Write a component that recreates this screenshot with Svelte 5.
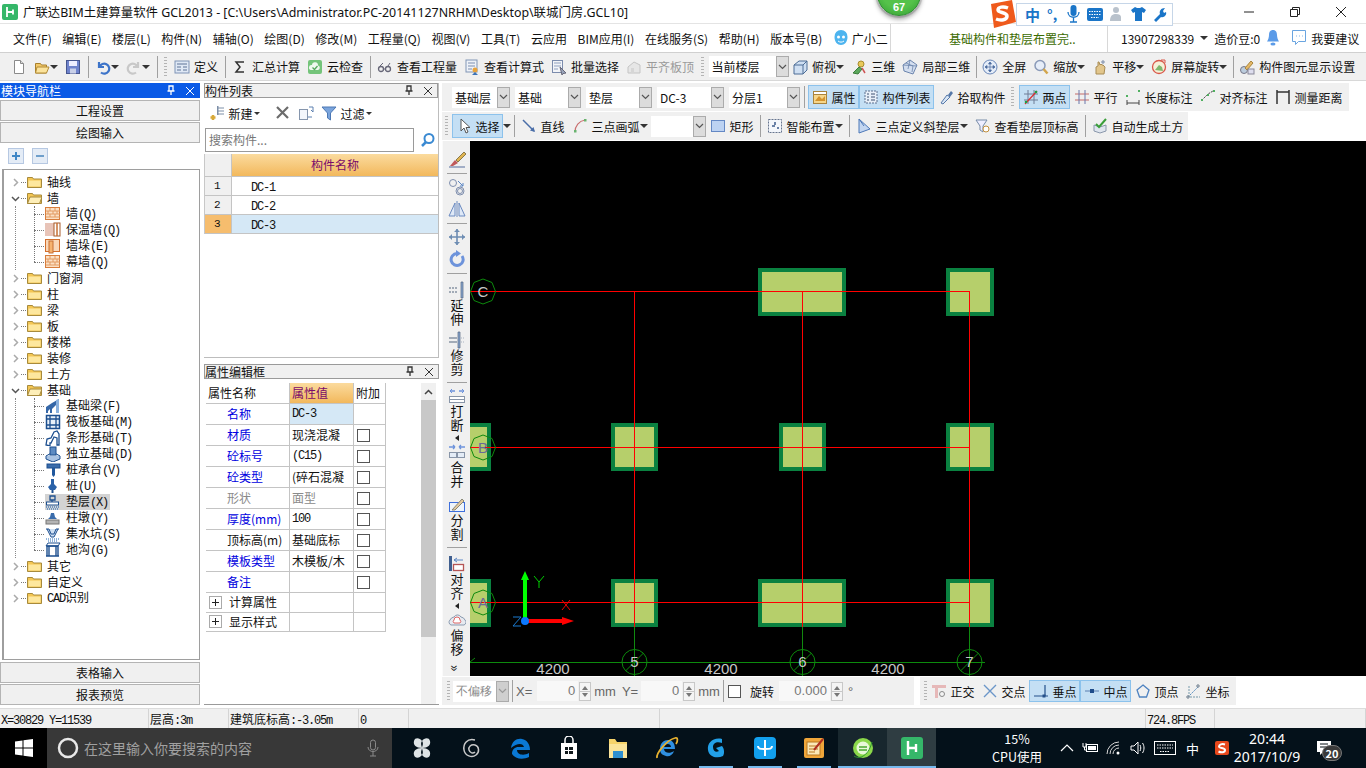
<script>
  const icons = {
    doc: '<path d="M3.500 1.500h6l3 3v10h-9z" fill="#fff" stroke="#8a8a8a"/><path d="M9.500 1.500v3h3" fill="#ddd" stroke="#8a8a8a"/>',
    open: '<path d="M1.500 4.500h5l1 1.500h5v8h-11z" fill="#f2c868" stroke="#a8802c"/><path d="M3 8h12l-2.500 6h-11z" fill="#fbe39c" stroke="#b38c36"/>',
    save: '<rect x="1.500" y="1.500" width="13" height="13" fill="#6f83cc" stroke="#46568f"/><rect x="4" y="2" width="8" height="5" fill="#eef"/><rect x="5" y="9.500" width="6" height="5" fill="#c9d0e8"/>',
    undo: '<path d="M4 3v5h5M4.500 8a5 5 0 1 1 1.500 5.500" fill="none" stroke="#3d74c9" stroke-width="2.200"/>',
    redo: '<path d="M12 3v5h-5M11.500 8a5 5 0 1 0-1.500 5.500" fill="none" stroke="#c8c8c8" stroke-width="2.200"/>',
    def: '<rect x="1" y="2" width="14" height="12" fill="#dfe8f5" stroke="#7f93b5"/><path d="M3 5h10M3 8h4M9 8h4M3 11h4M9 11h4" stroke="#5d7396"/>',
    sum: '<path d="M12 3H4l4 5-4 5h8" fill="none" stroke="#333" stroke-width="1.500"/>',
    cloud: '<rect x="1" y="1" width="14" height="14" rx="2" fill="#74c47a"/><path d="M4 11a2.500 2.500 0 0 1 1-5 3 3 0 0 1 6 .5 2.300 2.300 0 0 1 0 4.500z" fill="#eef8ee"/><path d="M5.500 8.500l2 2 3-3.500" fill="none" stroke="#54a85c" stroke-width="1.300"/>',
    glass: '<circle cx="4" cy="10" r="2.500" fill="none" stroke="#667" stroke-width="1.300"/><circle cx="11" cy="10" r="2.500" fill="none" stroke="#667" stroke-width="1.300"/><path d="M6.500 10h2M3 7l3-3M11 7l2-3" stroke="#667"/>',
    calc: '<rect x="2" y="1" width="11" height="12" fill="#eef2f8" stroke="#8095b5"/><path d="M4 4h7M4 7h7M4 10h4" stroke="#7d8fb0"/><circle cx="11" cy="11" r="2.500" fill="#e8a33c"/><path d="M8 16l3-3 3 3" fill="#3c74b8"/>',
    batch: '<rect x="1.500" y="1.500" width="10" height="12" fill="#f2f4f8" stroke="#7c8cad"/><path d="M3 4h7M3 7h7M3 10h4" stroke="#8fa0bf"/><path d="M9 8l6 6-3 .5-1 1.500z" fill="#9aa6bd" stroke="#667"/>',
    flat: '<path d="M2 14V8l6-5 6 3v8z" fill="#e6e6e6" stroke="#c4c4c4"/><path d="M5 14V9h3v5" fill="#d6d6d6"/>',
    top: '<path d="M2 6l5-4h8v9l-4 4H2z" fill="#cfdff2" stroke="#4c6d96"/><path d="M2 6h9v9M11 6l4-4" fill="none" stroke="#4c6d96"/>',
    d3: '<circle cx="10" cy="5" r="3" fill="#e8c95a" stroke="#a98c2c"/><path d="M2 14l6-6 3 2-4 5z" fill="#5ca85c" stroke="#3b7c3b"/><path d="M11 9l3 5" stroke="#cf5555" stroke-width="1.500"/>',
    local: '<path d="M8 1l7 5-4 9-9-3-1-6z" fill="#d3deef" stroke="#6c85ad"/><path d="M4 4l7 3-1 6M8 1L6 10M1 6l14 1" fill="none" stroke="#6c85ad" stroke-width=".8"/>',
    full: '<circle cx="8" cy="8" r="7" fill="#e4ecf8" stroke="#6a87b8"/><path d="M8 3v10M3 8h10M8 3l-1.500 2h3zM8 13l-1.500-2h3zM3 8l2-1.500v3zM13 8l-2-1.500v3z" stroke="#4b6b9e" fill="#4b6b9e" stroke-width=".7"/>',
    zoom: '<circle cx="7" cy="6.500" r="5" fill="#e6edf8" stroke="#8a9ab8" stroke-width="1.500"/><path d="M10.500 10l4 4.500" stroke="#d2a54c" stroke-width="2.500"/>',
    pan: '<path d="M4 15V8l2-1V3l1 0 1 3 1-1 1 1 1 0 2 2-1 7z" fill="#e2c68c" stroke="#a88c55"/><path d="M11 1v4M9 3h4" stroke="#7a8ba8"/>',
    rot: '<circle cx="8" cy="8" r="6.500" fill="#f5f0d8" stroke="#d9584a" stroke-width="1.300"/><path d="M4 11l4-5 3 2 1 4z" fill="#7fb86f"/><path d="M10 1h4v3" fill="none" stroke="#d9584a"/>',
    show: '<circle cx="5" cy="11" r="3.500" fill="#bcd" stroke="#778"/><path d="M6 9l6-7 2 2-6 7z" fill="#e6b968" stroke="#a7843c"/><rect x="9" y="10" width="6" height="5" fill="#dde" stroke="#889"/>',
    attr: '<rect x="1.500" y="2.500" width="13" height="12" fill="#f6d68a" stroke="#a9843d"/><path d="M3 12l4-5 3 3 3-3v5z" fill="#d4942e"/><rect x="1.500" y="2.500" width="13" height="3" fill="#fff" stroke="#a9843d"/>',
    list: '<rect x="2" y="2" width="12" height="12" fill="#e8eff8" stroke="#5b6e8e" stroke-dasharray="2 1"/><path d="M4 5h2M4 8h2M4 11h2M8 5h4M8 8h4M8 11h4" stroke="#3d5070"/>',
    pick: '<path d="M3 14l6-8 3 2-7 7z" fill="#d8e6f6" stroke="#5477a8"/><path d="M10 6l3-4 2 2-3 4z" fill="#5477a8"/>',
    two: '<path d="M1 5h14M1 11h14M5 1v14M11 1v14" stroke="#6f7d96"/><path d="M2 15L14 2" stroke="#d93030" stroke-width="1.200"/><circle cx="3" cy="13" r="1.300" fill="#1f9d45"/><circle cx="13" cy="3" r="1.300" fill="#1f9d45"/>',
    par: '<path d="M1 5h14M1 11h14" stroke="#c46a6a"/><path d="M5 1v14M11 1v14" stroke="#6a78ad"/>',
    len: '<path d="M2 14h12M2 11v5M14 11v5" stroke="#444"/><rect x="1" y="6" width="2" height="2" fill="#50b060"/><rect x="13" y="1" width="2" height="2" fill="#50b060"/>',
    ali: '<path d="M2 11L8 5l5-3" fill="none" stroke="#444" stroke-dasharray="2 1"/><rect x="1" y="10" width="2" height="2" fill="#50b060"/><rect x="7" y="5" width="2" height="2" fill="#50b060"/><rect x="13" y="1" width="2" height="2" fill="#50b060"/>',
    meas: '<path d="M2 1v14M14 1v14M2 3h12" stroke="#333" stroke-width="1.500"/>',
    sel: '<path d="M5 1v12l3-3 2 5 2-1-2-4.500h4z" fill="#fff" stroke="#555"/>',
    line: '<path d="M2 2l11 11" stroke="#4a6ea8" stroke-width="1.500"/><path d="M14 14l-5-1.500 3.500-3.500z" fill="#4a6ea8"/>',
    arc: '<path d="M3 14C3 8 7 3 13 2" fill="none" stroke="#c97070" stroke-width="1.200"/><rect x="2" y="12" width="2.500" height="2.500" fill="#69b36f"/><rect x="12" y="1" width="2.500" height="2.500" fill="#69b36f"/>',
    rect: '<rect x="1.500" y="2.500" width="13" height="11" fill="#bcd2f2" stroke="#6488c4"/>',
    smart: '<rect x="1.500" y="1.500" width="13" height="13" fill="#f3f6fb" stroke="#67758e" stroke-dasharray="2 1"/><path d="M8 4v3M5 8h3M11 11v-2" stroke="#3d5b8c" stroke-width="1.500"/>',
    slope: '<path d="M3 1v14l11-4z" fill="#c3d6f1" stroke="#4d78b8"/><path d="M3 1l5 7" stroke="#4d78b8"/>',
    elev: '<path d="M1 2h11l-4 6v6l-3-2V8z" fill="#eef" stroke="#778ca8"/><circle cx="11" cy="11" r="3" fill="#fff" stroke="#c28f3c"/>',
    auto: '<path d="M2 7v6l6 2 6-2V7l-6 2z" fill="#dfe5ee" stroke="#8a97ab"/><path d="M4 6l3 3 7-8" fill="none" stroke="#3a9e3a" stroke-width="2"/>',
    ortho: '<path d="M1 2h14v3H7v10H4V5H1z" fill="#e6b8b8"/><circle cx="11" cy="11" r="2.500" fill="#f4f4f4" stroke="#8a8a8a"/>',
    cross: '<path d="M2 2l12 12M14 2L2 14" stroke="#6b96c9" stroke-width="1.400"/>',
    perp: '<path d="M1 13h14M12 2v11" stroke="#24508a" stroke-width="1.200"/><rect x="9.500" y="11.500" width="3" height="3" fill="#24508a"/>',
    mid: '<path d="M1 8h14" stroke="#5a7fb0"/><rect x="6" y="6" width="4" height="4" fill="#1e4c8a"/>',
    vert: '<path d="M8 2l6 5-2.500 7h-7L2 7z" fill="none" stroke="#4e82c0" stroke-width="1.300"/>',
    coord: '<path d="M3 3v11h11" fill="none" stroke="#79a" stroke-dasharray="2 1"/><path d="M4 12l8-8" stroke="#5a8fc0" stroke-dasharray="2 1"/><circle cx="12" cy="3" r="1.200" fill="none" stroke="#678"/><circle cx="2" cy="14" r="1.200" fill="none" stroke="#678"/>',
    add: '<path d="M8 3h7M8 6h7M8 9h7" stroke="#7d8fa8"/><rect x="8" y="1" width="1.500" height="9" fill="#7d8fa8"/><path d="M4 10v5M1.500 12.500h5" stroke="#d7a93a" stroke-width="2.500"/>',
    x: '<path d="M2 2l11 11M13 2L2 13" stroke="#6c6c6c" stroke-width="2.200"/>',
    copy: '<rect x="1.500" y="4.500" width="8" height="10" fill="#f3f6fb" stroke="#8696ad"/><path d="M11 2h4v5M15 7l-2-2" fill="none" stroke="#5c80b0"/><path d="M10 12h4" stroke="#5c80b0"/>',
    filter: '<path d="M1 2h14l-5.500 6v7l-3-2V8z" fill="#7aa4dc" stroke="#4c78b4"/>',
    search: '<circle cx="9" cy="6.500" r="4.500" fill="none" stroke="#3b8ad2" stroke-width="2"/><path d="M6 10l-4 4" stroke="#3b8ad2" stroke-width="2.500"/>',
    wall: '<rect x=".5" y="1.500" width="14" height="12" fill="#fbe0c4" stroke="#d87d3c"/><path d="M1 5h14M1 8h14M1 11h14M5 2v3M10 2v3M3 5v3M8 5v3M12 5v3M5 8v3M10 8v3" stroke="#e29a63"/>',
    wall2: '<rect x="0" y="1" width="9" height="13" fill="#e8c4b8"/><rect x="9" y="1" width="6" height="13" fill="#fff" stroke="#a85d2c"/><path d="M12 1v13" stroke="#c66f34" stroke-width="1.500"/>',
    wall3: '<rect x=".5" y="1.500" width="14" height="12" fill="#f9d8b9" stroke="#d26f2e"/><rect x="4" y="3" width="4" height="12" fill="#f6b36f" stroke="#c66f34"/>',
    beam: '<path d="M1 15V9l6-4 7-4v14h-3V7L7 11v4H5v-4l-2 2v2z" fill="#3567a8"/><path d="M11 2l3-1v14h-3z" fill="#8ab1de"/>',
    raft: '<rect x="1.500" y="1.500" width="13" height="13" fill="#e8f0f9" stroke="#1d4f8f" stroke-width="1.500"/><path d="M1 5h14M1 11h14M5 1v14M11 1v14" stroke="#1d4f8f" stroke-width="1.300"/>',
    strip: '<path d="M1 15l1-6 4-1 3-6 3-1 2 3v11h-2v-7l-3-1-3 6H5v3z" fill="#fff" stroke="#1d4f8f" stroke-width="1.300"/>',
    iso: '<path d="M1 10l7-4 7 4-7 4z" fill="#dce9f6" stroke="#1d4f8f"/><path d="M1 10v3l7 3 7-3v-3" fill="#a9c3e3" stroke="#1d4f8f"/><rect x="5" y="1" width="6" height="8" fill="#5d8bc2" stroke="#1d4f8f"/>',
    cap: '<rect x="2" y="2" width="13" height="4" fill="#3a6cab" stroke="#1d4f8f"/><path d="M7 6h3v7l-1.500 2L7 13z" fill="#20589e"/>',
    pile: '<path d="M6 1h3v5l3 3-2 3H5L3 9l3-3z" fill="#2a62a8"/><path d="M7.500 12v3" stroke="#1d4f8f" stroke-width="2"/>',
    pad: '<path d="M5 2h5v4H5zM7 6v2" fill="none" stroke="#1d4f8f" stroke-width="1.300"/><rect x="1.500" y="8" width="12" height="3" fill="#fff" stroke="#1d4f8f"/><path d="M1 13h13M2 15h11" stroke="#4d81bf" stroke-dasharray="1 1" stroke-width="1.500"/>',
    pier: '<path d="M6 3h3l1 4 2 2H3l2-2z" fill="#3a6cab"/><rect x="1" y="10" width="13" height="4" fill="#b4b4b4" stroke="#777"/>',
    sump: '<path d="M1 3h3l2 5h3l2-5h3M2 3l4 8h3l4-8" fill="#cfe0f3" stroke="#1d4f8f"/><path d="M1 13h13M3 15h9" stroke="#6b9ad0" stroke-dasharray="1 1" stroke-width="1.500"/>',
    ditch: '<path d="M3 1h12l-2 3H1z" fill="#fff" stroke="#1d4f8f"/><path d="M2 4h11v10H2zM4 4v10M11 4v10M1 14h13" fill="none" stroke="#1d4f8f" stroke-width="1.400"/>'
  };

  const main = [
    { i: 'doc' }, { i: 'open', c: 1 }, { i: 'save' }, { sep: 1 }, { i: 'undo', c: 1 }, { i: 'redo', c: 1, dim: 1 }, { sep: 1 }, { grip: 1 },
    { i: 'def', t: '定义' }, { sep: 1 }, { i: 'sum', t: '汇总计算' }, { i: 'cloud', t: '云检查' }, { sep: 1 },
    { i: 'glass', t: '查看工程量' }, { i: 'calc', t: '查看计算式' }, { i: 'batch', t: '批量选择' }, { i: 'flat', t: '平齐板顶', dim: 1 }, { grip: 1 },
    { combo: '当前楼层', w: 80 }, { i: 'top', t: '俯视', c: 1 }, { i: 'd3', t: '三维' }, { i: 'local', t: '局部三维' }, { sep: 1, tight: 1 },
    { i: 'full', t: '全屏' }, { i: 'zoom', t: '缩放', c: 1 }, { i: 'pan', t: '平移', c: 1 }, { i: 'rot', t: '屏幕旋转', c: 1 }, { sep: 1, tight: 1 }, { i: 'show', t: '构件图元显示设置' }
  ];
  const rowA = [
    { combo: '基础层', w: 58 }, { combo: '基础', w: 66 }, { combo: '垫层', w: 66 }, { combo: 'DC-3', w: 67 }, { combo: '分层1', w: 71 }, { sep: 1 },
    { i: 'attr', t: '属性', on: 1 }, { i: 'list', t: '构件列表', on: 1 }, { i: 'pick', t: '拾取构件' }, { grip: 1 },
    { i: 'two', t: '两点', on: 1 }, { i: 'par', t: '平行' }, { i: 'len', t: '长度标注' }, { i: 'ali', t: '对齐标注' }, { i: 'meas', t: '测量距离' }
  ];
  const rowB = [
    { i: 'sel', t: '选择', on: 1 }, { drop: 1 }, { sep: 1 }, { i: 'line', t: '直线' }, { i: 'arc', t: '三点画弧', c: 1 }, { combo: '', w: 55 },
    { i: 'rect', t: '矩形' }, { sep: 1 }, { i: 'smart', t: '智能布置', c: 1 }, { sep: 1 }, { i: 'slope', t: '三点定义斜垫层', c: 1 }, { i: 'elev', t: '查看垫层顶标高' }, { sep: 1 }, { i: 'auto', t: '自动生成土方' }
  ];
  const snaps = [
    { i: 'ortho', t: '正交' }, { i: 'cross', t: '交点' }, { i: 'perp', t: '垂点', on: 1 }, { i: 'mid', t: '中点', on: 1 }, { i: 'vert', t: '顶点' }, { i: 'coord', t: '坐标' }
  ];
  const menus = ['文件(F)', '编辑(E)', '楼层(L)', '构件(N)', '辅轴(O)', '绘图(D)', '修改(M)', '工程量(Q)', '视图(V)', '工具(T)', '云应用', 'BIM应用(I)', '在线服务(S)', '帮助(H)', '版本号(B)'];

  const tree = [
    { t: '轴线' },
    { t: '墙', kids: [{ i: 'wall', t: '墙', s: '(Q)' }, { i: 'wall2', t: '保温墙', s: '(Q)' }, { i: 'wall3', t: '墙垛', s: '(E)' }, { i: 'wall', t: '幕墙', s: '(Q)' }] },
    { t: '门窗洞' }, { t: '柱' }, { t: '梁' }, { t: '板' }, { t: '楼梯' }, { t: '装修' }, { t: '土方' },
    { t: '基础', kids: [
      { i: 'beam', t: '基础梁', s: '(F)' }, { i: 'raft', t: '筏板基础', s: '(M)' }, { i: 'strip', t: '条形基础', s: '(T)' }, { i: 'iso', t: '独立基础', s: '(D)' },
      { i: 'cap', t: '桩承台', s: '(V)' }, { i: 'pile', t: '桩', s: '(U)' }, { i: 'pad', t: '垫层', s: '(X)', sel: 1 }, { i: 'pier', t: '柱墩', s: '(Y)' }, { i: 'sump', t: '集水坑', s: '(S)' }, { i: 'ditch', t: '地沟', s: '(G)' }
    ] },
    { t: '其它' }, { t: '自定义' }, { t: '识别', pre: 'CAD' }
  ];

  const props = [
    { n: '名称', v: 'DC-3', blue: 1, sel: 1, lat: 1 },
    { n: '材质', v: '现浇混凝', blue: 1, ck: 1 },
    { n: '砼标号', v: '(C15)', blue: 1, ck: 1, lat: 1 },
    { n: '砼类型', v: '(碎石混凝', blue: 1, ck: 1 },
    { n: '形状', v: '面型', gray: 1, ck: 1 },
    { n: '厚度(mm)', v: '100', blue: 1, ck: 1, lat: 1 },
    { n: '顶标高(m)', v: '基础底标', ck: 1 },
    { n: '模板类型', v: '木模板/木', blue: 1, ck: 1 },
    { n: '备注', v: '', blue: 1, ck: 1 }
  ];

  const side = [
    { i: 'paint' }, { sep: 1 }, { i: 'circ' }, { i: 'mirror' }, { sep: 1 }, { i: 'move' }, { i: 'spin' }, { sep: 1 },
    { i: 'ext', t: '延伸', push: 1 }, { i: 'trim', t: '修剪' }, { sep: 1 }, { i: 'brk', t: '打断', c: 1 }, { i: 'merge', t: '合并' }, { i: 'split', t: '分割', push: 1 }, { sep: 1 },
    { i: 'align', t: '对齐', c: 1, push: 1 }, { i: 'off', t: '偏移' }
  ];
  const sideIcons = {
    paint: '<path d="M2 16l5-6 3 3-5 3z" fill="#c05a5a"/><path d="M8 10l8-8 2 2-8 8z" fill="#e0b450" stroke="#8a7a4a"/><path d="M1 17h16" stroke="#8898b8" stroke-width="1.500"/>',
    circ: '<circle cx="5" cy="5" r="3.500" fill="none" stroke="#7f8fae"/><circle cx="12" cy="13" r="4" fill="none" stroke="#7f8fae"/><circle cx="12" cy="13" r="2.500" fill="none" stroke="#7f8fae"/><path d="M10 3l5 5M15 5v3h-3" fill="none" stroke="#5b86c4"/>',
    mirror: '<path d="M9 1v16" stroke="#6b8ac0"/><path d="M7 3v13H1zM11 3v13h6z" fill="#dfe9f7" stroke="#6b8ac0"/>',
    move: '<path d="M9 1v16M1 9h16" stroke="#6e8db3" stroke-width="1.600"/><path d="M9 1L6 4h6zM9 17l-3-3h6zM1 9l3-3v6zM17 9l-3-3v6z" fill="#6e8db3"/>',
    spin: '<path d="M14 6a6 6 0 1 1-5-2.500" fill="none" stroke="#6d93db" stroke-width="3"/><path d="M8 0l5 3.500L8 7z" fill="#6d93db"/>',
    ext: '<path d="M1 7h9M1 11h9" stroke="#55667e" stroke-dasharray="2 1"/><path d="M15 1v16h-2V1z" fill="#89a8d2" stroke="#55667e" stroke-width=".7"/>',
    trim: '<path d="M1 7h8M1 11h8" stroke="#55667e"/><path d="M10 1v16h2V1z" fill="#89a8d2" stroke="#55667e" stroke-width=".7"/><path d="M13 7h4M13 11h4" stroke="#aab4c2" stroke-dasharray="1 1"/>',
    brk: '<path d="M2 4h5M11 4h5" stroke="#6d93db" stroke-width="1.500"/><path d="M2 4l2-2M2 4l2 2M16 4l-2-2M16 4l-2 2" stroke="#6d93db"/><rect x="1.500" y="9.500" width="15" height="3" fill="#fff" stroke="#8895a8"/><rect x="1.500" y="12.500" width="15" height="3" fill="#fff" stroke="#8895a8"/>',
    merge: '<path d="M1 4h6M17 4h-6M7 4L5 2M7 4L5 6M11 4l2-2M11 4l2 2" stroke="#6d93db" stroke-width="1.300"/><rect x="1.500" y="9.500" width="7" height="5" fill="#e4ecf6" stroke="#8895a8"/><rect x="9.500" y="9.500" width="7" height="5" fill="#e4ecf6" stroke="#8895a8"/>',
    split: '<rect x="1.500" y="6.500" width="15" height="9" fill="#eef4fb" stroke="#3e6fdc"/><path d="M4 14l10-11 2 2-9 9z" fill="#e4c9a0" stroke="#887"/>',
    align: '<rect x="1" y="1" width="3" height="15" fill="#405f8f"/><path d="M6 5h9M6 5l3-2M6 5l3 2" stroke="#5b86c4"/><rect x="5.500" y="9.500" width="10" height="6" fill="#fff" stroke="#b55555" stroke-width="1.300"/>',
    off: '<path d="M3 14a3 3 0 0 1-1-5 5 5 0 0 1 4-3 4 4 0 0 1 7 0 5 5 0 0 1 4 3 3 3 0 0 1-1 5z" fill="#e6eaf0" stroke="#8b9bb0"/><path d="M6 12a2 2 0 0 1 0-3 3 3 0 0 1 6 0 2 2 0 0 1 0 3z" fill="#fff" stroke="#d66"/>'
  };

  // canvas data, in screen coordinates
  const pads = [
    [470, 579, 21, 48], [611, 579, 47, 48], [758, 579, 88, 48], [946, 579, 48, 48],
    [470, 423, 21, 48], [611, 423, 47, 48], [779, 423, 47, 48], [946, 423, 48, 48],
    [758, 268, 88, 48], [946, 268, 48, 48]
  ];
  const rowAxes = [['C', 291.5], ['B', 447.5], ['A', 602.5]];
  const colAxes = [['5', 634.5], ['6', 802.5], ['7', 969.5]];
  const dims = [553, 721, 888];

  const status = [
    { l: 'X=30829 Y=11539', w: 149 }, { c: '层高', l: ':3m', w: 80 }, { c: '建筑底标高', l: ':-3.05m', w: 130 }, { l: '0', w: 50 },
    { w: 251 }, { w: 486 }, { l: '724.8FPS', w: 69 }, { w: 151 }
  ];
  const apps = ['fan', 'spiral', 'edge', 'store', 'files', 'ie', 'gl', 'glz', 'note', 'orb', 'gcl'];
</script>

{#snippet glyph(name, size = 16)}
  <svg width={size} height={size} viewBox="0 0 16 16">{@html icons[name]}</svg>
{/snippet}

{#snippet bar(items)}
  {#each items as it}
    {#if it.sep}
      <span class="sep" class:tight={it.tight}></span>
    {:else if it.grip}
      <span class="grip"></span>
    {:else if it.drop}
      <i class="caret loose"></i>
    {:else if it.combo !== undefined}
      <span class="combo" style="width:{it.w}px"><span class="combo-v">{it.combo}</span><span class="combo-b"><svg width="9" height="6" viewBox="0 0 9 6"><path d="M1 1l3.500 3.500L8 1" fill="none" stroke="#555" stroke-width="1.200"/></svg></span></span>
    {:else}
      <span class="tool" class:on={it.on} class:dim={it.dim}>
        {@render glyph(it.i)}
        {#if it.t}<span>{it.t}</span>{/if}
        {#if it.c}<i class="caret"></i>{/if}
      </span>
    {/if}
  {/each}
{/snippet}

{#snippet dock(title, active)}
  <div class="dock" class:active>
    <span class="dock-t">{title}</span>
    <svg width="10" height="11" viewBox="0 0 10 11"><path d="M3 1h4v5H3zM1.500 6h7M5 6v4" fill="none" stroke="currentColor" stroke-width="1.300"/></svg>
    <svg width="10" height="10" viewBox="0 0 10 10"><path d="M1 1l8 8M9 1l-8 8" stroke="currentColor"/></svg>
  </div>
{/snippet}

{#snippet spinner()}
  <span class="spin"><svg width="10" height="17" viewBox="0 0 10 17"><path d="M5 3l3 4H2zM5 14l3-4H2z" fill="#777"/></svg></span>
{/snippet}

<div class="screen">
  <header class="title">
    <svg class="logo" width="16" height="16" viewBox="0 0 16 16"><rect width="16" height="16" rx="2" fill="#35b769"/><path d="M5 3v10M5 8h6M11 5.500v5" stroke="#fff" stroke-width="1.800"/></svg>
    <span class="title-t">广联达BIM土建算量软件 GCL2013 - [C:\Users\Administrator.PC-20141127NRHM\Desktop\联城门房.GCL10]</span>
    <div class="win">
      <svg width="12" height="12" viewBox="0 0 12 12"><path d="M1 6h10" stroke="#222"/></svg>
      <svg width="12" height="12" viewBox="0 0 12 12"><path d="M1.500 3.500h7v7h-7zM3.500 3.500v-2h7v7h-2" fill="none" stroke="#222"/></svg>
      <svg width="12" height="12" viewBox="0 0 12 12"><path d="M1 1l10 10M11 1L1 11" stroke="#222"/></svg>
    </div>
  </header>

  <nav class="menu">
    <div class="menu-l">
      {#each menus as m}<span class="menu-i">{m}</span>{/each}
      <span class="menu-i helper">
        <svg width="16" height="18" viewBox="0 0 16 18"><path d="M8 1a6.500 6.500 0 0 1 6.500 7c0 5-3 8-6.500 8S1.500 13 1.500 8A6.500 6.500 0 0 1 8 1z" fill="#4db4ef"/><circle cx="5.500" cy="8" r="1.500" fill="#fff"/><circle cx="10.500" cy="8" r="1.500" fill="#fff"/><path d="M5 12c2 1.500 4 1.500 6 0" stroke="#fff" fill="none"/></svg>
        广小二
      </span>
    </div>
    <div class="menu-msg">基础构件和垫层布置完..</div>
    <div class="menu-r">
      <span>13907298339</span><i class="caret"></i><span>造价豆:0</span>
      <svg width="14" height="18" viewBox="0 0 14 18"><path d="M7 1c3 0 4 2.500 4 5s1 5 2 6.500H1C2 11 3 8.500 3 6s1-5 4-5z" fill="#5b9be8"/><ellipse cx="7" cy="15" rx="2.500" ry="1.500" fill="#5b9be8"/></svg>
      <span class="advice">
        <svg width="16" height="18" viewBox="0 0 16 18"><path d="M1.500 1.500h13v11h-7l-3 3v-3h-3z" fill="#fff" stroke="#6aa5e0"/><path d="M5 7h.800M8 7h.800M11 7h.800" stroke="#6aa5e0"/></svg>
        我要建议
      </span>
    </div>
  </nav>

  <div class="toolbar main-bar">{@render bar(main)}</div>

  <div class="work">
    <aside class="nav">
      {@render dock('模块导航栏', true)}
      <button class="nav-b first">工程设置</button>
      <button class="nav-b">绘图输入</button>
      <div class="expand">
        <span class="ex"><svg width="12" height="12" viewBox="0 0 12 12"><path d="M6 2v8M2 6h8" stroke="#3f87c6" stroke-width="2"/></svg></span>
        <span class="ex"><svg width="12" height="12" viewBox="0 0 12 12"><path d="M2 6h8" stroke="#6f9fcb" stroke-width="2"/></svg></span>
      </div>
      <div class="tree">
        {#each tree as n}
          <div class="node">
            <svg class="chev" width="9" height="9" viewBox="0 0 9 9">
              {#if n.kids}<path d="M1 3l3.500 3.500L8 3" fill="none" stroke="#555" stroke-width="1.500"/>{:else}<path d="M3 1l3.500 3.500L3 8" fill="none" stroke="#aaa" stroke-width="1.500"/>{/if}
            </svg>
            <span class="dots"></span>
            <svg width="15" height="12" viewBox="0 0 15 12">
              <path d="M.5 1.500h5l1 1.500h8v8.500H.5z" fill="#f4c653" stroke="#a78a3c"/>
              {#if n.kids}<path d="M3 5h12l-2.500 6.500H.5z" fill="#fdeeb8" stroke="#a78a3c"/>{:else}<path d="M1.500 4.500h12v6h-12z" fill="#fde79e"/>{/if}
            </svg>
            <span class="label">{#if n.pre}<span class="lat">{n.pre}</span>{/if}{n.t}</span>
          </div>
          {#if n.kids}
            <div class="kids">
              {#each n.kids as k}
                <div class="leaf">
                  <span class="dots"></span>
                  <span class="leaf-c" class:sel={k.sel}>{@render glyph(k.i)}<span class="label">{k.t}<span class="lat">{k.s}</span></span></span>
                </div>
              {/each}
            </div>
          {/if}
        {/each}
      </div>
      <button class="nav-b low">表格输入</button>
      <button class="nav-b">报表预览</button>
    </aside>

    <section class="mid">
      <div class="panel list-p">
        {@render dock('构件列表', false)}
        <div class="list-tools">
          <span class="tool">{@render glyph('add')}<span>新建</span><i class="caret small"></i></span>
          <span class="tool gapx">{@render glyph('x')}</span>
          <span class="tool">{@render glyph('copy')}</span>
          <span class="tool">{@render glyph('filter')}<span>过滤</span><i class="caret small"></i></span>
        </div>
        <div class="search">
          <span class="search-i">搜索构件...</span>
          <span class="search-b">{@render glyph('search')}</span>
        </div>
        <div class="grid">
          <div class="g-h"><span class="g-n"></span><span class="g-t head">构件名称</span></div>
          {#each ['DC-1', 'DC-2', 'DC-3'] as name, i}
            <div class="g-r" class:cur={i === 2}><span class="g-n">{i + 1}</span><span class="g-t"><span class="lat">{name}</span></span></div>
          {/each}
        </div>
      </div>

      <div class="panel attr-p">
        {@render dock('属性编辑框', false)}
        <div class="attr-body">
          <div class="attr-tbl">
            <div class="a-r a-head"><span class="a-n">属性名称</span><span class="a-v head">属性值</span><span class="a-x">附加</span></div>
            {#each props as p}
              <div class="a-r">
                <span class="a-n ind" class:blue={p.blue} class:gray={p.gray}>{p.n}</span>
                <span class="a-v" class:sel={p.sel} class:gray={p.gray} class:lat={p.lat}>{p.v}</span>
                <span class="a-x">{#if p.ck}<i class="ck"></i>{/if}</span>
              </div>
            {/each}
            {#each ['计算属性', '显示样式'] as g}
              <div class="a-r a-g"><span class="a-n"><i class="plus"></i>{g}</span><span class="a-v"></span><span class="a-x"></span></div>
            {/each}
          </div>
          <div class="scroll">
            <span class="scroll-b"><svg width="9" height="6" viewBox="0 0 9 6"><path d="M1 5l3.500-3.500L8 5" fill="none" stroke="#444" stroke-width="1.500"/></svg></span>
            <span class="scroll-t"></span>
          </div>
        </div>
      </div>
    </section>

    <section class="draw">
      <div class="tb-row"><div class="toolbar row-a">{@render bar(rowA)}</div></div>
      <div class="tb-row"><div class="toolbar row-b"><span class="grip"></span>{@render bar(rowB)}</div></div>
      <div class="stage">
        <div class="side">
          {#each side as s}
            {#if s.sep}
              <span class="side-sep"></span>
            {:else}
              <div class="side-i" class:push={s.push} class:hascaret={s.c}>
                <svg width="18" height="18" viewBox="0 0 18 18">{@html sideIcons[s.i]}</svg>
                {#if s.t}<span class="side-t">{s.t}</span>{/if}
                {#if s.c}<i class="side-c"></i>{/if}
              </div>
            {/if}
          {/each}
          <span class="side-more">»</span>
        </div>
        <svg class="cad" width="896" height="535" viewBox="470 141 896 535">
          {#each pads as [x, y, w, h]}
            <rect x={x + 2} y={y + 2} width={w - 4} height={h - 4} fill="#b6cf6b" stroke="#0a8140" stroke-width="4" />
            {#if x === 470}<rect x="468" y={y} width="6" height={h} fill="#b6cf6b" />
              <path d="M470 {y + 2}h21M470 {y + h - 2}h21" stroke="#0a8140" stroke-width="4" />{/if}
          {/each}
          {#each rowAxes as [n, y]}
            <path d="M470 {y}H970" stroke="#ff0000" />
          {/each}
          {#each colAxes as [n, x]}
            <path d="M{x} 291V627" stroke="#ff0000" />
            <path d="M{x} 627V676" stroke="#0f8a0f" />
          {/each}
          <path d="M470 662.500H985" stroke="#0d8a0d" />
          <path d="M470 662l5-4" stroke="#0d8a0d" />
          {#each rowAxes as [n, y]}
            <polygon points="{483 + 12.500},{y} {483 + 9},{y - 9} {483},{y - 12.500} {483 - 9},{y - 9} {483 - 12.500},{y} {483 - 9},{y + 9} {483},{y + 12.500} {483 + 9},{y + 9}" fill="none" stroke="#0d8a0d" />
            <text class="axis" x="483" y={y + 5.500} fill={n === 'C' ? '#c8c8c8' : '#6a6a9a'} text-anchor="middle">{n}</text>
          {/each}
          {#each colAxes as [n, x]}
            <circle cx={x} cy="662" r="12.500" fill="none" stroke="#0d8a0d" />
            <path d="M{x - 9} 671L{x + 9} 653" stroke="#0d8a0d" />
            <text class="axis" x={x} y="667" fill="#c8c8c8" text-anchor="middle">{n}</text>
          {/each}
          {#each dims as x}
            <text class="dim-t" x={x} y="674" text-anchor="middle">4200</text>
          {/each}
          <path d="M525 621V578" stroke="#00ff00" stroke-width="4" />
          <path d="M525 571l-4 9h8z" fill="#00ff00" />
          <path d="M525 621H563" stroke="#ff0000" stroke-width="4" />
          <path d="M574 621l-12-4v8z" fill="#ff0000" />
          <circle cx="525" cy="621" r="4" fill="#0a78ff" />
          <path d="M534 576l5 6 5-6M539 582v6" fill="none" stroke="#00cc00" />
          <path d="M562 600l8 10M570 600l-8 10" stroke="#f00000" />
          <path d="M513 617h8l-8 9h8" fill="none" stroke="#1a7ad0" />
        </svg>
      </div>
      <div class="opts">
        <div class="toolbar opt-bar">
          <span class="grip"></span>
          <span class="combo off" style="width:56px"><span class="combo-v">不偏移</span><span class="combo-b"><svg width="9" height="6" viewBox="0 0 9 6"><path d="M1 1l3.500 3.500L8 1" fill="none" stroke="#999" stroke-width="1.200"/></svg></span></span>
          <span class="sep"></span>
          <span class="o-l">X=</span>
          <span class="num">0</span>{@render spinner()}
          <span class="o-l">mm</span>
          <span class="o-l y">Y=</span>
          <span class="num">0</span>{@render spinner()}
          <span class="o-l">mm</span>
          <span class="sep"></span>
          <i class="ck big"></i>
          <span class="o-t">旋转</span>
          <span class="num wide">0.000</span>{@render spinner()}
          <span class="o-l deg">°</span>
        </div>
        <div class="toolbar snap-bar"><span class="grip"></span>{@render bar(snaps)}</div>
      </div>
    </section>
  </div>

  <footer class="status">
    {#each status as s}
      <span class="st" style="width:{s.w}px">{#if s.c}{s.c}{/if}{#if s.l}<span class="lat">{s.l}</span>{/if}</span>
    {/each}
  </footer>

  <div class="taskbar">
    <span class="start"><svg width="18" height="18" viewBox="0 0 18 18"><path d="M0 2.500l7.500-1v7H0zM8.500 1.300L18 0v8.500H8.500zM0 9.500h7.500v7L0 15.500zM8.500 9.500H18V18l-9.500-1.300z" fill="#fff"/></svg></span>
    <div class="cortana">
      <svg width="22" height="22" viewBox="0 0 22 22"><circle cx="11" cy="11" r="9" fill="none" stroke="#e8e8e8" stroke-width="2.500"/></svg>
      <span class="c-t">在这里输入你要搜索的内容</span>
      <svg width="12" height="18" viewBox="0 0 12 18"><rect x="3.500" y="1" width="5" height="10" rx="2.500" fill="none" stroke="#8a8a8a"/><path d="M1 8c0 6 10 6 10 0M6 13v4M3 17h6" fill="none" stroke="#8a8a8a"/></svg>
    </div>
    <div class="apps">
      {#each apps as a}
        <span class="app {a}">
          <svg width="24" height="24" viewBox="0 0 24 24">
            {#if a === 'fan'}
              <path d="M12 12C6 12 3 9 4 5s6-3 8 0 0 5 0 7zM12 12c6 0 9-3 8-7s-6-3-8 0 0 5 0 7zM12 12c-6 0-9 3-8 7s6 3 8 0 0-5 0-7zM12 12c6 0 9 3 8 7s-6 3-8 0 0-5 0-7z" fill="#dfe4e6"/>
            {:else if a === 'spiral'}
              <path d="M16 4C8 2 4 8 5 14s8 8 12 5 3-9-1-10-7 2-6 5 4 4 6 2" fill="none" stroke="#c9c9c9" stroke-width="1.500"/>
            {:else if a === 'edge'}
              <path d="M3 12C4 5 9 2 14 3c5 1 8 5 8 11H9c0 5 7 6 12 3v4c-6 3-14 2-17-3 0-5 3-6 5-7h7c-1-4-7-4-13 1z" fill="#0a78d4"/>
            {:else if a === 'store'}
              <path d="M4 7h16v16H4z" fill="#fff"/><path d="M8 8V4a4 4 0 0 1 8 0v4" fill="none" stroke="#fff" stroke-width="1.500"/><path d="M8 11h3v3H8zM12 11h4v3h-4zM8 15h3v3H8zM12 15h4v3h-4z" fill="#10181c"/>
            {:else if a === 'files'}
              <path d="M3 3h6l2 3h10v16H3z" fill="#f6d36a"/><path d="M3 8h18v14H3z" fill="#fbe49a"/><path d="M7 15h10v7H7z" fill="#2f8fd0"/>
            {:else if a === 'ie'}
              <path d="M5 13c0-6 4-9 8-9s7 3 7 9H9c0 4 6 5 10 2-1 4-5 6-8 5-4-1-6-3-6-7zM9 11h7c0-4-6-4-7 0z" fill="#2f8fe0"/><path d="M2 22C1 17 12 4 20 2c3-1 3 3 1 6" fill="none" stroke="#e8b230" stroke-width="1.800"/>
            {:else if a === 'gl'}
              <path d="M18 3C9 1 3 7 4 14s9 9 15 6c2-3 1-8-1-10l-6 2 3 3c-3 2-6 0-6-4s4-6 9-4z" fill="#22a0e8"/>
            {:else if a === 'glz'}
              <rect x="1" y="1" width="22" height="22" rx="4" fill="#12a0ee"/><path d="M12 4v16M5 10c0 3 2 3 7 3s7 0 7-3" fill="none" stroke="#fff" stroke-width="2"/>
            {:else if a === 'note'}
              <rect x="2" y="2" width="20" height="20" rx="2" fill="#f0a63a"/><rect x="5" y="6" width="13" height="13" fill="#fbe8b8" stroke="#b87820"/><path d="M7 10h9M7 13h9M7 16h6" stroke="#b87820"/><path d="M12 14L21 3" stroke="#b03020" stroke-width="2"/>
            {:else if a === 'orb'}
              <circle cx="12" cy="12" r="10" fill="#8bd84a"/><circle cx="12" cy="12" r="6.500" fill="#e8f8d8"/><path d="M8 11h8M8 14h8" stroke="#4aa830" stroke-width="1.500"/><path d="M3 20c4 3 14 2 18-14" fill="none" stroke="#2f9a2f"/>
            {:else}
              <rect x="1" y="1" width="22" height="22" rx="3" fill="#35b769"/><path d="M8 5v14M8 12h8M16 8v8" stroke="#fff" stroke-width="2.400"/>
            {/if}
          </svg>
        </span>
      {/each}
    </div>
    <div class="tray">
      <span class="cpu"><span>15%</span><span>CPU使用</span></span>
      <svg width="14" height="8" viewBox="0 0 14 8"><path d="M1 7l6-6 6 6" fill="none" stroke="#fff" stroke-width="1.200"/></svg>
      <svg width="16" height="14" viewBox="0 0 16 14"><rect x="4.500" y="3.500" width="11" height="7" fill="none" stroke="#fff"/><rect x="6" y="5" width="8" height="4" fill="#fff"/><path d="M1 2v4h3V2M2.500 6v3h2" fill="none" stroke="#fff"/></svg>
      <svg width="16" height="14" viewBox="0 0 16 14"><path d="M1 13a12 12 0 0 1 12-12M4 13a9 9 0 0 1 9-9M7 13a6 6 0 0 1 6-6" fill="none" stroke="#d8d8d8"/><circle cx="12" cy="12" r="1.500" fill="#fff"/></svg>
      <svg width="16" height="16" viewBox="0 0 16 16"><path d="M1 6h3l4-4v12l-4-4H1z" fill="none" stroke="#fff"/><path d="M10 5c1 2 1 4 0 6M12.500 3c2 3 2 7 0 10" fill="none" stroke="#fff"/></svg>
      <svg width="22" height="14" viewBox="0 0 22 14"><rect x=".5" y=".5" width="21" height="13" fill="none" stroke="#fff"/><path d="M3 4h16M3 7h16M6 10.500h10" stroke="#fff" stroke-dasharray="1.500 1"/></svg>
      <span class="ime">中</span>
      <svg width="16" height="16" viewBox="0 0 16 16"><rect x="1" y="1" width="14" height="14" rx="2" fill="#e8481c"/><path d="M11 4.500C8 3.500 5 4.500 5 6.500s6 1 6 3.500-3.500 3-6.500 1.500" fill="none" stroke="#fff" stroke-width="2"/></svg>
      <span class="clock"><span>20:44</span><span>2017/10/9</span></span>
      <span class="notif">
        <svg width="16" height="16" viewBox="0 0 16 16"><path d="M0 1h14v11H6l-3 3v-3H0z" fill="#fff"/><path d="M3 4h8M3 7h8" stroke="#050f14"/></svg>
        <b>20</b>
      </span>
    </div>
  </div>

  <!-- floating widgets over the menu bar -->
  <div class="ball"><span>67</span></div>
  <div class="sogou">
    <svg class="sg" width="27" height="28" viewBox="0 0 27 28"><path d="M2 4l21-4 4 22-22 6z" fill="#ef5a1c"/><path d="M19 8c-5-2-10-1-10 2s9 2 9 6-6 5-11 3" fill="none" stroke="#fff" stroke-width="3.500"/></svg>
    <div class="sg-bar">
      <span class="sg-z">中</span>
      <span class="sg-p">°,</span>
      <svg width="13" height="18" viewBox="0 0 13 18"><rect x="3.500" y="0" width="6" height="11" rx="3" fill="#1a75c8"/><path d="M1 7c0 7 11 7 11 0M6.500 13v4M3 17h7" fill="none" stroke="#1a75c8" stroke-width="1.300"/></svg>
      <svg width="16" height="13" viewBox="0 0 16 13"><rect width="16" height="13" rx="2" fill="#1a75c8"/><path d="M2 3.500h12M2 6.500h12M4 9.500h8" stroke="#fff" stroke-dasharray="1.500 1"/></svg>
      <svg width="14" height="16" viewBox="0 0 14 16"><circle cx="6" cy="4" r="3" fill="#b9c2cc"/><path d="M0 15c0-6 3-7 6-7s5 1 5 3v4z" fill="#b9c2cc"/></svg>
      <svg width="15" height="14" viewBox="0 0 15 14"><path d="M4 0L0 3l2 3 2-1v9h7V5l2 1 2-3-4-3-2 1H6z" fill="#1a75c8"/></svg>
      <svg width="14" height="15" viewBox="0 0 14 15"><path d="M1 13l6-6c-1-3 1-6 5-6l-2 3 1 2 2-1c1 3-2 6-5 5l-5 5z" fill="#1a75c8"/></svg>
    </div>
  </div>
</div>

<style>
  :global(body) {
    margin: 0;
    background: #fff;
  }

  .screen {
    position: relative;
    width: 1366px;
    height: 768px;
    overflow: hidden;
    display: flex;
    flex-direction: column;
    font-family: "Noto Sans CJK SC", "Noto Sans", sans-serif;
    font-size: 12px;
    color: #111;
    background: #fff;
  }

  svg {
    flex: none;
    display: block;
  }

  .lat {
    font-family: "Liberation Mono", "Noto Sans CJK SC", monospace;
    font-size: 12px;
    letter-spacing: -1.2px;
  }

  /* title + menu */
  .title {
    height: 23px;
    display: flex;
    align-items: center;
    padding-left: 2px;
    flex: none;
  }

  .title-t {
    margin-left: 5px;
    font-size: 12.400px;
    font-family: "Noto Sans", "Noto Sans CJK SC", sans-serif;
    white-space: nowrap;
  }

  .win {
    margin-left: auto;
    display: flex;
    gap: 34px;
    padding-right: 19px;
  }

  .menu {
    height: 29px;
    flex: none;
    display: flex;
    align-items: center;
    border-top: 1px solid #e4e4e4;
    box-sizing: border-box;
  }

  .menu-l {
    display: flex;
    align-items: center;
    height: 100%;
    width: 891px;
    box-sizing: border-box;
    padding-left: 7.700px;
    border-right: 1px solid #d8d8d8;
    flex: none;
  }

  .menu-i {
    padding: 0 5.300px;
    white-space: nowrap;
  }

  .helper {
    display: flex;
    align-items: center;
    gap: 3px;
  }

  .menu-msg {
    width: 216px;
    flex: none;
    padding-left: 58px;
    box-sizing: border-box;
    color: #3b6b00;
    white-space: nowrap;
  }

  .menu-r {
    flex: 1;
    height: 100%;
    display: flex;
    align-items: center;
    gap: 6px;
    padding-left: 13px;
    border-left: 1px solid #d8d8d8;
  }

  .advice {
    display: flex;
    align-items: center;
    gap: 4px;
    margin-left: 5px;
  }

  /* toolbars */
  .toolbar {
    display: flex;
    align-items: center;
    background: #f0f0f0;
    white-space: nowrap;
  }

  .main-bar {
    height: 29px;
    flex: none;
    padding-left: 7.500px;
    border-top: 1px solid #d0d0d0;
    border-bottom: 1px solid #d8d8d8;
    box-sizing: border-box;
  }

  .tool {
    height: 24px;
    display: flex;
    align-items: center;
    gap: 4px;
    padding: 0 2.500px;
    box-sizing: border-box;
    border: 1px solid transparent;
    flex: none;
  }

  .tool.on {
    background: #c4dff4;
    border-color: #8cc2ec;
  }

  .tool.dim {
    color: #9a9a9a;
  }

  .caret {
    width: 0;
    height: 0;
    margin-left: -3px;
    border: 4px solid transparent;
    border-top: 4px solid #333;
    border-bottom: 0;
    display: block;
    flex: none;
  }

  .caret.small {
    border-width: 3px;
    border-bottom: 0;
  }

  .caret.loose {
    margin-left: 0;
  }

  .menu-r .caret {
    margin: 0;
  }

  .row-b .tool .caret,
  .main-bar .tool .caret {
    margin-left: -4px;
  }

  .sep {
    width: 1px;
    height: 22px;
    margin: 0 3px;
    background: #a0a0a0;
    flex: none;
  }

  .sep.tight {
    margin: 0 2px;
  }

  .row-b .sep {
    margin: 0 2.500px;
  }

  .grip {
    width: 3px;
    height: 20px;
    margin: 0 5px 0 3px;
    background: repeating-linear-gradient(#b4b4b4 0 1px, transparent 1px 3px);
    flex: none;
  }

  .main-bar .grip {
    margin: 0 4px 0 3px;
  }

  .combo {
    height: 21px;
    display: flex;
    flex: none;
    margin-right: 5px;
    background: #fff;
    box-sizing: border-box;
  }

  .combo + .sep {
    margin-left: -1px;
  }

  .main-bar .combo {
    margin: 0 0 0 1px;
  }

  .row-b .combo {
    margin-right: 0;
  }

  .combo-v {
    flex: 1;
    padding-left: 3px;
    line-height: 21px;
  }

  .combo-b {
    width: 13px;
    background: #dcdcdc;
    border: 1px solid #ababab;
    box-sizing: border-box;
    display: flex;
    align-items: center;
    justify-content: center;
  }

  .combo.off {
    color: #8a8a8a;
    margin-right: 0;
  }

  .combo.off .combo-b {
    background: #cfcfcf;
  }

  /* main area */
  .work {
    height: 627px;
    flex: none;
    display: flex;
    padding-top: 2px;
    box-sizing: border-box;
  }

  .dock {
    height: 15px;
    display: flex;
    align-items: center;
    gap: 9px;
    padding-right: 4px;
    background: #f0f0f0;
    border: 1px solid #9a9a9a;
    box-sizing: border-box;
    color: #333;
    flex: none;
  }

  .dock-t {
    flex: 1;
    color: #111;
    line-height: 13px;
  }

  .dock.active {
    background: #0a5ae6;
    border-color: #0a5ae6;
    color: #fff;
  }

  .dock.active .dock-t {
    color: #fff;
  }

  .nav {
    width: 200px;
    flex: none;
    display: flex;
    flex-direction: column;
    margin: 0 4px 3px 0;
  }

  .nav-b {
    height: 21px;
    flex: none;
    margin-top: 1px;
    padding: 0;
    background: #f0f0f0;
    border: 1px solid #b4b4b4;
    font: inherit;
    color: #111;
  }

  .nav-b.first,
  .nav-b.low {
    margin-top: 2px;
  }

  .expand {
    height: 26px;
    flex: none;
    display: flex;
    align-items: center;
    gap: 8px;
    padding-left: 8px;
    box-sizing: border-box;
  }

  .ex {
    width: 14px;
    height: 14px;
    display: flex;
    align-items: center;
    justify-content: center;
    background: #e4ecf6;
    border: 1px solid #b6c8e2;
  }

  .tree {
    flex: 1;
    margin: 0 0 0 2px;
    border: 1px solid #9e9e9e;
    border-left-width: 2px;
    padding-top: 4px;
    box-sizing: border-box;
    overflow: hidden;
  }

  .node,
  .leaf {
    height: 16px;
    display: flex;
    align-items: center;
  }

  .chev {
    margin-left: 7px;
  }

  .dots {
    width: 5px;
    height: 0;
    margin: 0 1px;
    border-top: 1px dotted #777;
    flex: none;
  }

  .node .label {
    margin-left: 5px;
  }

  .label {
    line-height: 16px;
    white-space: nowrap;
  }

  .kids {
    margin-left: 11px;
    padding-left: 18px;
    border-left: 1px dotted #888;
    position: relative;
  }

  .kids::before {
    content: "";
    position: absolute;
    left: 18px;
    top: 0;
    bottom: 8px;
    border-left: 1px dotted #777;
  }

  .leaf .dots {
    width: 10px;
    margin: 0 1px 0 0;
  }

  .leaf-c {
    display: flex;
    align-items: center;
    gap: 5px;
    height: 16px;
    padding-right: 2px;
  }

  .leaf-c.sel {
    background: #d3d3d3;
  }

  /* middle column */
  .mid {
    width: 235px;
    flex: none;
    display: flex;
    flex-direction: column;
    margin: 0 3px 3px 0;
  }

  .panel {
    display: flex;
    flex-direction: column;
  }

  .list-p {
    height: 275px;
    flex: none;
    border-right: 1px solid #bdbdbd;
    border-bottom: 1px solid #bdbdbd;
    box-sizing: border-box;
  }

  .list-tools {
    height: 30px;
    flex: none;
    display: flex;
    align-items: center;
    padding-left: 1px;
  }

  .gapx {
    margin-left: 8px;
  }

  .search {
    height: 24px;
    flex: none;
    display: flex;
    align-items: center;
    margin: 0 0 2px 1px;
  }

  .search-i {
    width: 209px;
    height: 24px;
    border: 1px solid #9a9a9a;
    box-sizing: border-box;
    padding-left: 3px;
    line-height: 22px;
    color: #777;
  }

  .search-b {
    margin-left: 6px;
  }

  .grid {
    border-left: 1px solid #c8c8c8;
  }

  .g-h,
  .g-r {
    display: flex;
    height: 19px;
    border-bottom: 1px solid #c4c4c4;
    box-sizing: border-box;
  }

  .g-h {
    height: 23px;
  }

  .g-n {
    width: 27px;
    flex: none;
    background: #f0f0f0;
    border-right: 1px solid #c4c4c4;
    padding-left: 9px;
    box-sizing: border-box;
    font-family: "Liberation Mono", monospace;
    font-size: 11px;
    line-height: 18px;
  }

  .g-t {
    flex: 1;
    padding-left: 19px;
    line-height: 18px;
  }

  .g-t.head {
    text-align: center;
    padding: 0;
    line-height: 22px;
  }

  .head {
    background: linear-gradient(#fbdb9e, #f2b85c);
    color: #7a0a6a;
  }

  .g-r.cur .g-n {
    background: #f6bd6e;
  }

  .g-r.cur .g-t {
    background: #d5e8f6;
  }

  .attr-p {
    flex: 1;
    margin-top: 6px;
    border-bottom: 1px solid #9a9a9a;
    min-height: 0;
  }

  .attr-body {
    flex: 1;
    display: flex;
    justify-content: space-between;
    padding: 4px 0 0 2px;
    min-height: 0;
  }

  .attr-tbl {
    width: 180px;
  }

  .a-r {
    display: flex;
    height: 21px;
    border-bottom: 1px solid #c4c4c4;
    box-sizing: border-box;
  }

  .a-g {
    height: 19.500px;
  }

  .a-n,
  .a-v,
  .a-x {
    border-right: 1px solid #c4c4c4;
    box-sizing: border-box;
    line-height: 20px;
    white-space: nowrap;
    overflow: hidden;
    display: flex;
    align-items: center;
  }

  .a-n {
    width: 84px;
    padding-left: 2px;
  }

  .a-n.ind {
    padding-left: 21px;
  }

  .a-v {
    width: 64px;
    padding-left: 2px;
  }

  .a-x {
    width: 32px;
    padding-left: 2px;
  }

  .a-v.sel {
    background: #d5e8f6;
  }

  .blue {
    color: #0000e0;
  }

  .gray {
    color: #8a8a8a;
  }

  .ck {
    width: 13px;
    height: 13px;
    margin-left: 1px;
    display: block;
    background: #fff;
    border: 1px solid #555;
    box-sizing: border-box;
    flex: none;
  }

  .ck.big {
    margin: 0 1px;
  }

  .plus {
    width: 11px;
    height: 11px;
    margin: 0 7px 0 1px;
    background:
      linear-gradient(#222, #222) center / 7px 1px no-repeat,
      linear-gradient(#222, #222) center / 1px 7px no-repeat,
      #fff;
    border: 1px solid #aaa;
    flex: none;
  }

  .scroll {
    width: 15px;
    margin-right: 3px;
    background: #f0f0f0;
    display: flex;
    flex-direction: column;
  }

  .scroll-b {
    height: 17px;
    flex: none;
    display: flex;
    align-items: center;
    justify-content: center;
  }

  .scroll-t {
    height: 237px;
    background: #c8c8c8;
    flex: none;
  }

  /* drawing column */
  .draw {
    flex: 1;
    min-width: 0;
    display: flex;
    flex-direction: column;
  }

  .tb-row {
    height: 29px;
    flex: none;
    display: flex;
  }

  .row-a {
    width: 907px;
    height: 28px;
    padding-left: 10px;
    box-sizing: border-box;
  }

  .row-a .grip {
    margin-left: 2px;
  }

  .row-b {
    width: 746px;
    height: 28px;
    box-sizing: border-box;
    padding-left: 2px;
  }

  .row-b > .grip {
    margin: 0 4px 0 1px;
  }

  .stage {
    height: 535px;
    flex: none;
    display: flex;
  }

  .side {
    width: 28px;
    flex: none;
    box-sizing: border-box;
    padding-top: 9px;
    background: #f0f0f0;
    border-left: 1px solid #fafafa;
    display: flex;
    flex-direction: column;
    align-items: center;
    overflow: hidden;
  }

  .side-sep {
    width: 20px;
    height: 1px;
    margin: 1px 0 4px;
    background: #a0a0a0;
    flex: none;
  }

  .side-i {
    display: flex;
    flex-direction: column;
    align-items: center;
    margin-bottom: 4px;
    flex: none;
  }

  .side-i.push {
    margin-top: 3px;
  }

  .side-i.hascaret {
    margin-bottom: 0;
  }

  .side-t {
    writing-mode: vertical-rl;
    text-orientation: upright;
    font-size: 13px;
    line-height: 18px;
    letter-spacing: 1px;
  }

  .side-c {
    width: 0;
    height: 0;
    margin: 2px 0;
    border: 3px solid transparent;
    border-right: 4px solid #222;
    border-left: 0;
    display: block;
  }

  .side-more {
    margin-top: auto;
    margin-bottom: 1px;
    font-size: 14px;
    line-height: 14px;
    transform: rotate(90deg);
  }

  .cad {
    background: #000;
  }

  .axis {
    font-family: "Liberation Sans", sans-serif;
    font-size: 15px;
  }

  .dim-t {
    font-family: "Liberation Sans", sans-serif;
    font-size: 15px;
    fill: #c8c8c8;
  }

  .opts {
    height: 29px;
    flex: none;
    display: flex;
    gap: 6px;
  }

  .opt-bar,
  .snap-bar {
    height: 28px;
    margin-top: 1px;
    box-sizing: border-box;
    flex: none;
  }

  .opt-bar {
    width: 472px;
    padding-left: 2px;
    gap: 3px;
    font-family: "Liberation Sans", sans-serif;
    color: #666;
  }

  .opt-bar .grip {
    margin-right: 0;
  }

  .opt-bar .sep {
    margin: 0;
  }

  .o-l {
    font-size: 13px;
  }

  .o-l.y {
    margin-left: 3px;
  }

  .deg {
    margin-left: 2px;
  }

  .o-t {
    margin: 0 2px 0 5px;
    color: #111;
    font-family: "Noto Sans CJK SC", sans-serif;
  }

  .num {
    width: 41px;
    height: 20px;
    margin-left: 2px;
    background: #f8f8f8;
    text-align: right;
    padding-right: 3px;
    line-height: 20px;
    box-sizing: border-box;
    color: #777;
    font-size: 13px;
  }

  .o-l.y + .num {
    margin-left: 0;
  }

  .num.wide {
    width: 51px;
    margin-left: 0;
  }

  .spin {
    width: 12px;
    height: 19px;
    margin-left: -2px;
    border: 1px solid #c8c8c8;
    box-sizing: border-box;
    background:
      linear-gradient(#c8c8c8, #c8c8c8) center / 100% 1px no-repeat,
      #f4f4f4;
  }

  .snap-bar {
    width: 316px;
    padding-left: 1px;
  }

  .snap-bar .grip {
    margin-right: 0;
  }

  .snap-bar .tool {
    height: 22px;
  }

  /* status + taskbar */
  .status {
    height: 20px;
    flex: none;
    display: flex;
    background: #f0f0f0;
    border-top: 1px solid #dcdcdc;
    box-sizing: border-box;
    font-size: 12px;
  }

  .st {
    border-right: 1px solid #d4d4d4;
    box-sizing: border-box;
    padding-left: 1px;
    line-height: 19px;
    white-space: nowrap;
    flex: none;
  }

  .taskbar {
    height: 40px;
    flex: none;
    display: flex;
    background: #04111a;
    color: #fff;
  }

  .start {
    width: 47px;
    display: flex;
    align-items: center;
    justify-content: center;
    background: #000;
    flex: none;
  }

  .cortana {
    width: 345px;
    flex: none;
    display: flex;
    align-items: center;
    gap: 5px;
    padding: 0 13px 0 10px;
    box-sizing: border-box;
    background: #383838;
  }

  .c-t {
    flex: 1;
    color: #a0a0a0;
    font-size: 14px;
    white-space: nowrap;
  }

  .apps {
    display: flex;
    padding-left: 5px;
    flex: none;
  }

  .app {
    width: 49px;
    height: 40px;
    display: flex;
    align-items: center;
    justify-content: center;
    box-sizing: border-box;
  }

  .app.gl,
  .app.glz,
  .app.note {
    background: linear-gradient(#76b9ed, #76b9ed) center bottom / 34px 2px no-repeat;
  }

  .app.orb {
    background: #18272e;
    box-shadow: inset 0 -2px 0 #76b9ed;
  }

  .app.gcl {
    background: #2f3d42;
    box-shadow: inset 0 -2px 0 #76b9ed;
  }

  .tray {
    flex: 1;
    display: flex;
    align-items: center;
    gap: 8px;
    padding-left: 50px;
  }

  .cpu,
  .clock {
    display: flex;
    flex-direction: column;
    align-items: center;
    line-height: 18px;
    font-size: 12.500px;
    white-space: nowrap;
  }

  .cpu {
    width: 62px;
    margin-right: 4px;
  }

  .ime {
    font-size: 13px;
    margin: 0 7px 0 2px;
  }

  .clock {
    font-family: "Noto Sans", sans-serif;
    font-size: 14px;
    width: 58px;
  }

  .notif {
    position: relative;
    margin-left: 13px;
  }

  .notif b {
    position: absolute;
    left: 5px;
    top: 5px;
    width: 20px;
    height: 16px;
    border-radius: 8px;
    background: #3a3a3a;
    border: 1px solid #777;
    font-size: 11px;
    line-height: 14px;
    text-align: center;
    box-sizing: border-box;
  }

  /* floating */
  .ball {
    position: absolute;
    left: 877px;
    top: -28px;
    width: 44px;
    height: 44px;
    border-radius: 50%;
    background: radial-gradient(circle at 50% 40%, #55c24a 55%, #2f9a2f 100%);
    border: 1px solid #2f8a33;
    box-shadow: 0 3px 5px rgba(0, 0, 0, 0.4), 0 0 0 2px #e6e6e6;
    display: flex;
    align-items: flex-end;
    justify-content: center;
    color: #fff;
    font-family: "Liberation Sans", sans-serif;
    font-weight: 700;
    font-size: 11px;
    line-height: 14px;
    padding-bottom: 1px;
    box-sizing: border-box;
  }

  .sogou {
    position: absolute;
    left: 989px;
    top: 0;
    display: flex;
    align-items: center;
    height: 28px;
  }

  .sg-bar {
    width: 157px;
    height: 23px;
    display: flex;
    align-items: center;
    gap: 7px;
    padding-left: 8px;
    background: #fff;
    border: 1px solid #c6d6e8;
    box-sizing: border-box;
    color: #1a75c8;
  }

  .sg-z {
    font-size: 15px;
    font-weight: 700;
    line-height: 15px;
  }

  .sg-p {
    font-weight: 700;
    font-size: 14px;
    width: 13px;
    line-height: 14px;
  }
</style>
